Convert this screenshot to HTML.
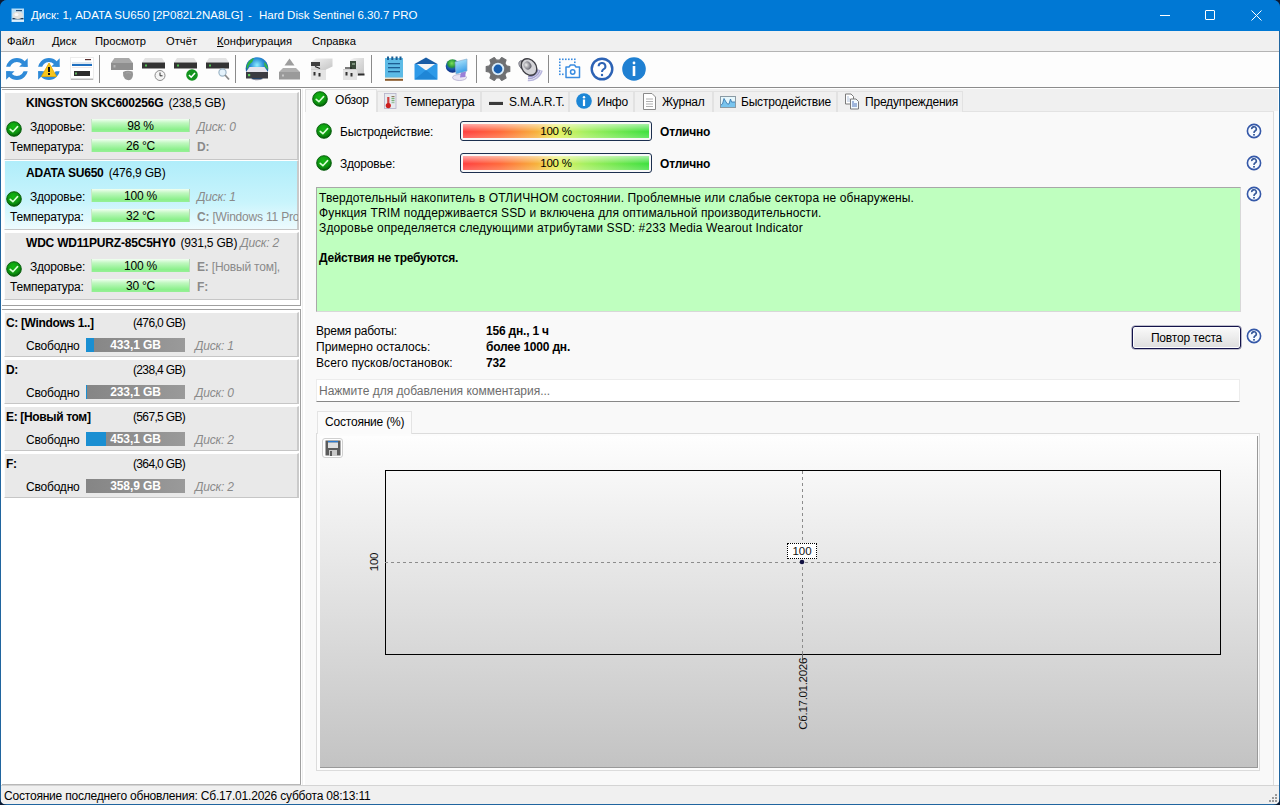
<!DOCTYPE html>
<html><head><meta charset="utf-8">
<style>
*{box-sizing:border-box;margin:0;padding:0}
html,body{width:1280px;height:805px;overflow:hidden;background:#0b1a33}
body{font-family:"Liberation Sans",sans-serif;font-size:12px;letter-spacing:-0.2px;color:#000;position:relative}
.a{position:absolute}
.nw{white-space:nowrap}
.b{font-weight:bold}
.r{font-weight:normal;margin-left:2px}
.it{font-style:italic;color:#8a8a8a}
.gr{color:#8a8a8a}
.win{left:0;top:0;width:1280px;height:805px;background:#20659f;border-radius:7px;overflow:hidden}
.title{left:0;top:0;width:1280px;height:31px;background:#0078d4}
.ttext{left:31px;top:9px;color:#fff;font-size:11.5px;letter-spacing:0;white-space:nowrap}
.menu{left:1px;top:31px;width:1278px;height:21px;background:#f0f0f0;border-bottom:1px solid #b4b4b4}
.mi{top:4px;font-size:11.2px;letter-spacing:0;color:#000;white-space:nowrap}
.tb{left:1px;top:52px;width:1278px;height:36px;background:#fdfdfd;border-bottom:1px solid #8c8c8c}
.client{left:1px;top:88px;width:1278px;height:697px;background:#fff}
.status{left:1px;top:785px;width:1278px;height:19px;background:#f0f0f0;border-top:1px solid #d4d4d4}
.card{left:4px;width:295px;background:#e9e9e9;border-top:1px solid #fff;border-left:1px solid #fbfbfb;border-right:2px solid #cacaca;border-bottom:1px solid #c6c6c6}
.card.sel{background:linear-gradient(#b0edfa,#c8f4fc 60%,#eefbfe)}
.gbar{width:99px;height:13px;background:linear-gradient(#f2fff2,#c0f8c0 30%,#8cf08c 80%,#96f096);text-align:center;line-height:14px;font-size:12px;border-left:1px solid #c8e8c8;border-right:1px solid #b8d8b8}
.fbar{width:99px;height:14px;background:linear-gradient(90deg,#858585,#9a9a9a);color:#fff;font-weight:bold;font-size:12px;letter-spacing:-0.1px;text-align:center;line-height:15px}
.fbar i{position:absolute;left:0;top:0;height:14px;background:#1a8fd2}
.fbar span{position:relative}
.pbar{width:192px;height:20px;border:1px solid #1c2f4f;border-radius:3px;background:#f8f8f8;padding:1px}
.pbar::before{content:"";position:absolute;left:2px;top:2px;right:2px;bottom:2px;background:linear-gradient(90deg,#ff4040 0%,#ff6a3a 20%,#f7b23a 40%,#e8f05a 50%,#a8f060 65%,#3ee03e 100%)}
.pbar::after{content:"";position:absolute;left:2px;top:2px;right:2px;bottom:2px;background:linear-gradient(rgba(255,255,255,0.55),rgba(255,255,255,0.1) 45%,rgba(0,0,0,0) 55%,rgba(255,255,255,0.2))}
.pbar{text-align:center;line-height:17px;font-size:11.5px}
.pbar span{position:relative;z-index:2}
.tab{background:#f0f0f0;border:1px solid #e2e2e2;border-bottom:none}
.tab.act{background:#f9f9f9;border-color:#e3e3e3;z-index:2}
.msg{background:#bfffbf;border:1px solid #a8a8a8;border-right-color:#d8d8d8;border-bottom-color:#d8d8d8;font-size:12px;letter-spacing:0.13px}
.btn{border:1px solid #13134a;border-radius:3px;box-shadow:0 0 0 0.6px rgba(19,19,74,0.5),inset 0 0 0 1px #fdfdff;background:linear-gradient(#fafafa,#ececec 50%,#dedede);text-align:center;line-height:22px;font-size:12px}
.cmt{background:#fff;border:1px solid #ececec;border-bottom:1px solid #888;color:#6d6d6d}
.chart{background:linear-gradient(#fefefe,#c3c3c3);border-right:1px solid #999;border-bottom:1px solid #999}
</style></head><body>
<svg width="0" height="0" style="position:absolute"><defs>
<radialGradient id="okg" cx="0.45" cy="0.35" r="0.65"><stop offset="0" stop-color="#14b814"/><stop offset="0.7" stop-color="#0c920f"/><stop offset="1" stop-color="#035c06"/></radialGradient>
<symbol id="ok" viewBox="0 0 16 16"><circle cx="8" cy="8" r="7.9" fill="#c8f0c8" opacity="0.6"/><circle cx="8" cy="8" r="7.3" fill="url(#okg)" stroke="#03560a" stroke-width="0.9"/><path d="M4.2 8.3 L6.9 10.7 L11.6 5.6" stroke="#dcffd8" stroke-width="1.6" fill="none" stroke-linecap="round"/></symbol>
<symbol id="hlp" viewBox="0 0 16 16"><circle cx="8" cy="8" r="6.6" fill="#f6faff" stroke="#3558a8" stroke-width="1.6"/><path d="M5.7 6.1 A2.3 2.2 0 1 1 9 8 Q8 8.6 8 10" stroke="#35589a" stroke-width="1.6" fill="none"/><rect x="7.1" y="11" width="1.8" height="1.6" fill="#35589a"/></symbol>
</defs></svg>
<div class="a win">
  <div class="a title">
    <svg class="a" style="left:11px;top:8px" width="14" height="15" viewBox="0 0 14 15"><rect x="0.5" y="0.5" width="12.5" height="13.5" fill="#b8ddf6"/><rect x="5" y="2" width="6" height="1.2" fill="#2a4a70"/><rect x="1.5" y="10" width="11" height="1.3" fill="#223a55"/><ellipse cx="6.8" cy="7.3" rx="5.2" ry="3.8" fill="#e4e2de"/><ellipse cx="5.5" cy="6.5" rx="2" ry="1.5" fill="#fafafa"/><rect x="1" y="12" width="12" height="1.5" fill="#dfeffb"/></svg>
    <div class="a ttext">Диск: 1, ADATA SU650 [2P082L2NA8LG]</div><div class="a ttext" style="left:248px">-</div><div class="a ttext" style="left:259px">Hard Disk Sentinel 6.30.7 PRO</div>
    <div class="a" style="left:1160px;top:15px;width:10px;height:1px;background:#fff"></div>
    <div class="a" style="left:1205px;top:10px;width:10px;height:10px;border:1px solid #fff;border-radius:1px"></div>
    <svg class="a" style="left:1251px;top:10px" width="11" height="11"><path d="M0.5 0.5 L10.5 10.5 M10.5 0.5 L0.5 10.5" stroke="#fff" stroke-width="1"/></svg>
  </div>
  <div class="a menu">
    <div class="a mi" style="left:6px">Файл</div>
    <div class="a mi" style="left:51px">Диск</div>
    <div class="a mi" style="left:94px">Просмотр</div>
    <div class="a mi" style="left:165px">Отчёт</div>
    <div class="a mi" style="left:216px"><u>К</u>онфигурация</div>
    <div class="a mi" style="left:311px">Справка</div>
  </div>
  <div class="a tb">
    <!-- refresh -->
    <svg class="a" style="left:4px;top:5px" width="24" height="24" viewBox="0 0 24 24">
      <defs><clipPath id="ct"><rect x="0" y="0" width="24" height="9.7"/></clipPath><clipPath id="cb"><rect x="0" y="14.2" width="24" height="10"/></clipPath></defs>
      <circle cx="11.9" cy="12" r="9" stroke="#2e8ad8" stroke-width="4" fill="none" clip-path="url(#ct)"/>
      <path d="M22.7 1.3 V9.7 H14.2 Z" fill="#2e8ad8"/>
      <circle cx="11.9" cy="12" r="9" stroke="#2e8ad8" stroke-width="4" fill="none" clip-path="url(#cb)"/>
      <path d="M1.1 22.7 V14.2 H9.5 Z" fill="#2e8ad8"/>
    </svg>
    <svg class="a" style="left:36px;top:5px" width="24" height="24" viewBox="0 0 24 24">
      <circle cx="11.9" cy="12" r="9" stroke="#2e8ad8" stroke-width="4" fill="none" clip-path="url(#ct)"/>
      <path d="M22.7 1.3 V9.7 H14.2 Z" fill="#2e8ad8"/>
      <circle cx="11.9" cy="12" r="9" stroke="#2e8ad8" stroke-width="4" fill="none" clip-path="url(#cb)"/>
      <path d="M1.1 22.7 V14.2 H9.5 Z" fill="#2e8ad8"/>
      <path d="M12 6 L19.5 19.5 H4.5 Z" fill="#f7c51c" stroke="#e3a900" stroke-width="0.8" stroke-linejoin="round"/>
      <rect x="11" y="10" width="2" height="5" fill="#111"/><rect x="11" y="16" width="2" height="2" fill="#111"/>
    </svg>
    <svg class="a" style="left:69px;top:5px" width="24" height="24" viewBox="0 0 24 24">
      <rect x="0.5" y="0.5" width="23" height="22" fill="#fff" stroke="#ececec"/>
      <rect x="1" y="21.5" width="22" height="1.5" fill="#b9b9b9"/>
      <rect x="2" y="5" width="20" height="2" fill="#dfe8f0"/>
      <rect x="2" y="7" width="20" height="2" fill="#1f6fc0"/>
      <rect x="15" y="2" width="6" height="1.2" fill="#5a3030"/>
      <rect x="2" y="10" width="20" height="1" fill="#f0e8e8"/>
      <rect x="4" y="14" width="16" height="5" fill="#2c2c2c"/>
      <rect x="5" y="15.5" width="2" height="2" fill="#5fb05f"/>
    </svg>
    <div class="a" style="left:98px;top:3px;width:1px;height:28px;background:#8a8a8a"></div>
    <!-- hdd gray with shield -->
    <svg class="a" style="left:109px;top:5px" width="25" height="25" viewBox="0 0 25 25">
      <path d="M4.5 1 H19 L23 6 H1 Z" fill="#a9a9a9"/>
      <rect x="1" y="6" width="22" height="7" fill="#8f8f8f"/>
      <rect x="3.5" y="8" width="2" height="2.5" fill="#b5b5b5"/>
      <path d="M13 15 Q17 13 22.5 14.5 Q24 19 21 22.5 Q18 24 15 22 Q12.5 19 13 15 Z" fill="#959595"/>
      <path d="M16 16 Q19 15 21 16.5" stroke="#aaa" stroke-width="0.8" fill="none"/>
    </svg>
    <!-- hdd clock -->
    <svg class="a" style="left:141px;top:5px" width="25" height="25" viewBox="0 0 25 25">
      <path d="M3 1 H20 L23 5.5 H0 Z" fill="#e2e2e2"/>
      <rect x="0" y="5.5" width="23" height="6" fill="#333"/>
      <rect x="3" y="7.5" width="2" height="2" fill="#4fc04f"/>
      <circle cx="18" cy="18.5" r="5" fill="#f4f4f4" stroke="#8b8b8b" stroke-width="1"/>
      <path d="M18 15.5 V18.8 H20.5" stroke="#333" stroke-width="1" fill="none"/>
    </svg>
    <!-- hdd check -->
    <svg class="a" style="left:173px;top:5px" width="25" height="25" viewBox="0 0 25 25">
      <path d="M3 1 H20 L23 5.5 H0 Z" fill="#e2e2e2"/>
      <rect x="0" y="5.5" width="23" height="6" fill="#333"/>
      <rect x="3" y="7.5" width="2" height="2" fill="#4fc04f"/>
      <circle cx="18" cy="18" r="5.8" fill="#13941e"/>
      <path d="M15 18 L17.2 20.2 L21 16" stroke="#fff" stroke-width="1.6" fill="none"/>
    </svg>
    <!-- hdd search -->
    <svg class="a" style="left:205px;top:5px" width="25" height="25" viewBox="0 0 25 25">
      <path d="M3 1 H20 L23 5.5 H0 Z" fill="#e2e2e2"/>
      <rect x="0" y="5.5" width="23" height="6" fill="#333"/>
      <rect x="3" y="7.5" width="2" height="2" fill="#4fc04f"/>
      <circle cx="16.5" cy="15.5" r="3.6" fill="#e4f2fb" stroke="#9fb7c8" stroke-width="1.2"/>
      <path d="M19 18 L23 22.5" stroke="#8a8a8a" stroke-width="1.8"/>
    </svg>
    <div class="a" style="left:234px;top:3px;width:1px;height:28px;background:#8a8a8a"></div>
    <!-- globe hdd -->
    <svg class="a" style="left:244px;top:4px" width="25" height="25" viewBox="0 0 25 25">
      <defs><radialGradient id="gl" cx="0.5" cy="0.35" r="0.65"><stop offset="0" stop-color="#8ff0ff"/><stop offset="0.45" stop-color="#2a8ed8"/><stop offset="1" stop-color="#0c3f80"/></radialGradient></defs>
      <circle cx="12" cy="12.5" r="11.3" fill="url(#gl)"/>
      <path d="M1.5 11 Q3 4 9 2 Q8 6 5 8 Q3 10 2.5 13 Z" fill="#2fb540"/>
      <path d="M19 6 Q23 9 23 13.5 Q21 12 19.5 10 Z" fill="#3ab84a"/>
      <path d="M4.5 11 H19.5 L23 16 H1 Z" fill="#e6e4ec"/>
      <rect x="1" y="16" width="22" height="6.5" fill="#3c3c42"/>
      <rect x="3" y="18" width="2.2" height="2.2" fill="#5fd060"/>
      <path d="M6 23 Q12 25.5 18 23 Z" fill="#8a8a9a"/>
    </svg>
    <!-- eject -->
    <svg class="a" style="left:277px;top:5px" width="25" height="25" viewBox="0 0 25 25">
      <path d="M11.5 1.5 L16.5 8.5 H6.5 Z" fill="#9d9d9d"/>
      <path d="M5 11 H18 L22 15 H1 Z" fill="#b0b0b0"/>
      <rect x="1" y="15" width="21" height="7.5" fill="#9a9a9a"/>
      <rect x="4" y="17.5" width="2" height="2" fill="#c8c8c8"/>
    </svg>
    <!-- drives -->
    <svg class="a" style="left:309px;top:5px" width="25" height="25" viewBox="0 0 25 25">
      <defs><linearGradient id="bx" x1="0" y1="0" x2="1" y2="1"><stop offset="0" stop-color="#f2f2f2"/><stop offset="1" stop-color="#c4c4c4"/></linearGradient></defs>
      <path d="M1 5 L6 1.5 H22.5 V9.5 L14 13.5 H1 Z" fill="url(#bx)"/>
      <path d="M1 5 H10 V9 H1 Z" fill="#3e3e3e"/>
      <path d="M5 9.5 L10 11.5" stroke="#222" stroke-width="1.2"/>
      <rect x="1" y="12" width="15" height="11" fill="#e4e4e4"/>
      <rect x="1" y="12" width="15" height="1" fill="#d0d0d0"/>
      <rect x="3.5" y="15" width="2" height="3.5" fill="#333"/><rect x="8.5" y="16" width="2" height="3.5" fill="#333"/>
    </svg>
    <!-- computer drives -->
    <svg class="a" style="left:341px;top:5px" width="25" height="25" viewBox="0 0 25 25">
      <path d="M8 3 L12 1 H22 V17.5 L14 19 H8 Z" fill="url(#bx)"/>
      <rect x="8" y="4" width="6" height="9" fill="#3a4a3a"/>
      <rect x="10" y="6" width="3" height="2" fill="#7a907a"/>
      <rect x="16" y="16.5" width="6.5" height="2" fill="#2e2e2e"/>
      <path d="M3 11 H10" stroke="#222" stroke-width="1.2"/>
      <rect x="1" y="12" width="14" height="11" fill="#e4e4e4"/>
      <rect x="1" y="12" width="14" height="1" fill="#d0d0d0"/>
      <rect x="3.5" y="15" width="2" height="3.5" fill="#333"/><rect x="8.5" y="16" width="2" height="3.5" fill="#333"/>
    </svg>
    <div class="a" style="left:370px;top:3px;width:1px;height:28px;background:#8a8a8a"></div>
    <!-- notepad -->
    <svg class="a" style="left:383px;top:4px" width="20" height="25" viewBox="0 0 20 25">
      <rect x="1" y="2" width="18" height="20" fill="#5dbbe6"/>
      <rect x="1" y="21.5" width="18" height="1.5" fill="#e9e2d0"/>
      <rect x="1" y="23" width="18" height="1.8" fill="#8b5a2b"/>
      <rect x="3" y="0.5" width="2" height="3.5" fill="#1d5e93"/><rect x="7.3" y="0.5" width="2" height="3.5" fill="#1d5e93"/><rect x="11.6" y="0.5" width="2" height="3.5" fill="#1d5e93"/><rect x="15.5" y="0.5" width="2" height="3.5" fill="#1d5e93"/>
      <rect x="4" y="7" width="12" height="1.3" fill="#1d5e93"/><rect x="4" y="11" width="12" height="1.3" fill="#1d5e93"/><rect x="4" y="15" width="12" height="1.3" fill="#1d5e93"/>
    </svg>
    <!-- mail -->
    <svg class="a" style="left:413px;top:5px" width="25" height="24" viewBox="0 0 25 24">
      <path d="M0.5 7 L12 0.5 L23.5 7 Z" fill="#1a5da6"/>
      <path d="M0.5 7 H23.5 V22.5 H0.5 Z" fill="#2e9ae8"/>
      <path d="M3 7 H21 L12 13.5 Z" fill="#f6f6f6"/>
      <path d="M0.5 22.5 L12 13 L23.5 22.5 Z" fill="#1f86d6"/>
    </svg>
    <!-- network -->
    <svg class="a" style="left:444px;top:4px" width="25" height="25" viewBox="0 0 25 25">
      <defs><linearGradient id="mon" x1="0" y1="0" x2="0.3" y2="1"><stop offset="0" stop-color="#b8ecfc"/><stop offset="1" stop-color="#3a9ee8"/></linearGradient>
      <radialGradient id="ng" cx="0.45" cy="0.3" r="0.7"><stop offset="0" stop-color="#7ae05a"/><stop offset="0.4" stop-color="#2a9a3a"/><stop offset="0.6" stop-color="#1a5ab0"/><stop offset="1" stop-color="#0a2a80"/></radialGradient></defs>
      <circle cx="7.5" cy="10" r="6.8" fill="url(#ng)"/>
      <ellipse cx="14.5" cy="21.5" rx="7" ry="3" fill="#e8e4f4" stroke="#a8a0c8" stroke-width="0.7"/>
      <path d="M16 16 L21 15.5 L20 21 L15 21.5 Z" fill="#9a80d8"/>
      <path d="M10 6 L22 3 V15 L11 18 Z" fill="url(#mon)" stroke="#8ab0d0" stroke-width="0.7"/>
    </svg>
    <div class="a" style="left:475px;top:3px;width:1px;height:28px;background:#8a8a8a"></div>
    <!-- gear -->
    <svg class="a" style="left:484px;top:5px" width="26" height="26" viewBox="0 0 26 26">
      <g transform="translate(13 12)">
        <path d="M8.46 -3.08 L11.74 -2.49 L11.74 2.49 L8.46 3.08 L6.89 5.79 L8.03 8.92 L3.71 11.41 L1.56 8.86 L-1.56 8.86 L-3.71 11.41 L-8.03 8.92 L-6.89 5.79 L-8.46 3.08 L-11.74 2.49 L-11.74 -2.49 L-8.46 -3.08 L-6.89 -5.79 L-8.03 -8.92 L-3.71 -11.41 L-1.56 -8.86 L1.56 -8.86 L3.71 -11.41 L8.03 -8.92 L6.89 -5.79 Z" fill="#6f7072" stroke="#6f7072" stroke-width="1.2" stroke-linejoin="round"/>
        <circle r="6.2" fill="#d8ecfa"/><circle r="4.4" fill="#1a5fae"/>
      </g>
    </svg>
    <!-- speaker -->
    <svg class="a" style="left:516px;top:5px" width="26" height="25" viewBox="0 0 26 25">
      <defs><radialGradient id="sp" cx="0.4" cy="0.35" r="0.7"><stop offset="0" stop-color="#f0f0f0"/><stop offset="1" stop-color="#5a5a66"/></radialGradient></defs>
      <path d="M21.18 12.46 A9.50 9.50 0 0 1 11.17 19.46" stroke="#8e8cc0" stroke-width="1.5" fill="none"/><path d="M23.11 12.98 A11.50 11.50 0 0 1 11.00 21.46" stroke="#a4a2d0" stroke-width="1.5" fill="none"/><path d="M25.04 13.49 A13.50 13.50 0 0 1 10.82 23.45" stroke="#bab8de" stroke-width="1.5" fill="none"/>
      <ellipse cx="5.5" cy="8" rx="3.2" ry="4.6" fill="url(#sp)" stroke="#6a6a78" stroke-width="0.8" transform="rotate(-25 5.5 8)"/>
      <ellipse cx="12" cy="10" rx="7" ry="9" fill="#d4d4d8" stroke="#3e3e44" stroke-width="1.4" transform="rotate(-38 12 10)"/>
      <ellipse cx="10.5" cy="8.5" rx="3.6" ry="4.2" fill="url(#sp)" transform="rotate(-38 10.5 8.5)"/>
    </svg>
    <div class="a" style="left:547px;top:3px;width:1px;height:28px;background:#8a8a8a"></div>
    <!-- screenshot -->
    <svg class="a" style="left:558px;top:6px" width="22" height="21" viewBox="0 0 22 21">
      <g fill="#3a8ce0"><rect x="0" y="0.5" width="1.6" height="1.6"/><rect x="3" y="0.5" width="1.6" height="1.6"/><rect x="6" y="0.5" width="1.6" height="1.6"/><rect x="9" y="0.5" width="1.6" height="1.6"/><rect x="12" y="0.5" width="1.6" height="1.6"/><rect x="15" y="0.5" width="1.6" height="1.6"/>
      <rect x="0" y="3.5" width="1.6" height="1.6"/><rect x="0" y="6.5" width="1.6" height="1.6"/><rect x="0" y="9.5" width="1.6" height="1.6"/><rect x="0" y="12.5" width="1.6" height="1.6"/><rect x="0" y="15.5" width="1.6" height="1.6"/><rect x="3" y="15.5" width="1.6" height="1.6"/><rect x="15" y="3.5" width="1.6" height="1.6"/></g>
      <path d="M7 9 H10 L11.5 7 H15.5 L17 9 H20.5 V19.5 H7 Z" fill="#fff" stroke="#3a8ce0" stroke-width="1.5" stroke-linejoin="round"/>
      <circle cx="13.7" cy="14" r="2.2" fill="none" stroke="#3a8ce0" stroke-width="1.5"/>
    </svg>
    <!-- help -->
    <svg class="a" style="left:589px;top:5px" width="24" height="24" viewBox="0 0 24 24">
      <circle cx="12" cy="12" r="10.3" fill="#fff" stroke="#2d63b5" stroke-width="2.4"/>
      <path d="M8.6 9.3 A3.4 3.4 0 1 1 13.4 12.4 Q12 13.2 12 15" stroke="#2d63b5" stroke-width="2" fill="none"/>
      <circle cx="12" cy="18" r="1.2" fill="#2d63b5"/>
    </svg>
    <!-- info -->
    <svg class="a" style="left:620px;top:4px" width="26" height="26" viewBox="0 0 26 26">
      <circle cx="13" cy="13" r="11.8" fill="#1f80d2"/>
      <circle cx="13" cy="7" r="1.4" fill="#fff"/>
      <rect x="11.7" y="10" width="2.6" height="10" fill="#fff"/>
    </svg>
  </div>
  <div class="a client"></div>
  <!-- left panel: disks -->
  <div class="a" style="left:2px;top:89px;width:299px;height:217px;background:#fff;border-top:1px solid #a7a7a7;border-right:1px solid #a0a0a0;border-bottom:1px solid #a0a0a0"></div>
  <div class="a card" style="top:92px;height:68px">
    <div class="a nw b" style="left:21px;top:3px">KINGSTON SKC600256G <span class="r">(238,5 GB)</span></div>
    <svg class="a chk" style="left:1px;top:28px" width="16" height="16"><use href="#ok"/></svg>
    <div class="a nw" style="left:25px;top:27px">Здоровье:</div>
    <div class="a gbar" style="left:86px;top:26px">98 %</div>
    <div class="a nw it" style="left:192px;top:27px">Диск: 0</div>
    <div class="a nw" style="left:5px;top:47px">Температура:</div>
    <div class="a gbar" style="left:86px;top:46px">26 °C</div>
    <div class="a nw gr b" style="left:192px;top:47px">D:</div>
  </div>
  <div class="a card sel" style="top:160px;height:70px">
    <div class="a nw b" style="left:21px;top:5px">ADATA SU650 <span class="r">(476,9 GB)</span></div>
    <svg class="a chk" style="left:1px;top:30px" width="16" height="16"><use href="#ok"/></svg>
    <div class="a nw" style="left:25px;top:29px">Здоровье:</div>
    <div class="a gbar" style="left:86px;top:28px">100 %</div>
    <div class="a nw it" style="left:192px;top:29px">Диск: 1</div>
    <div class="a nw" style="left:5px;top:49px">Температура:</div>
    <div class="a gbar" style="left:86px;top:48px">32 °C</div>
    <div class="a nw gr" style="left:192px;top:49px;width:101px;overflow:hidden"><b>C:</b> [Windows 11 Pro]</div>
  </div>
  <div class="a card" style="top:232px;height:68px">
    <div class="a nw b" style="left:21px;top:3px">WDC WD11PURZ-85C5HY0 <span class="r">(931,5 GB)</span> <span class="it" style="font-weight:normal">Диск: 2</span></div>
    <svg class="a chk" style="left:1px;top:28px" width="16" height="16"><use href="#ok"/></svg>
    <div class="a nw" style="left:25px;top:27px">Здоровье:</div>
    <div class="a gbar" style="left:86px;top:26px">100 %</div>
    <div class="a nw gr" style="left:192px;top:27px"><b>E:</b> [Новый том],</div>
    <div class="a nw" style="left:5px;top:47px">Температура:</div>
    <div class="a gbar" style="left:86px;top:46px">30 °C</div>
    <div class="a nw gr b" style="left:192px;top:47px">F:</div>
  </div>
  <!-- left panel: volumes -->
  <div class="a" style="left:2px;top:309px;width:299px;height:476px;background:#fff;border-top:1px solid #a0a0a0;border-right:1px solid #a0a0a0;border-bottom:1px solid #b8b8b8"></div>
  <div class="a card vol" style="top:312px;height:45px">
    <div class="a nw b" style="left:1px;top:3px;letter-spacing:-0.35px">C: [Windows 1..]</div>
    <div class="a nw" style="left:128px;top:3px;letter-spacing:-0.65px">(476,0 GB)</div>
    <div class="a nw" style="left:21px;top:26px">Свободно</div>
    <div class="a fbar" style="left:81px;top:25px"><i style="width:8px"></i><span>433,1 GB</span></div>
    <div class="a nw it" style="left:190px;top:26px">Диск: 1</div>
  </div>
  <div class="a card vol" style="top:359px;height:45px">
    <div class="a nw b" style="left:1px;top:3px;letter-spacing:-0.35px">D:</div>
    <div class="a nw" style="left:128px;top:3px;letter-spacing:-0.65px">(238,4 GB)</div>
    <div class="a nw" style="left:21px;top:26px">Свободно</div>
    <div class="a fbar" style="left:81px;top:25px"><i style="width:1px"></i><span>233,1 GB</span></div>
    <div class="a nw it" style="left:190px;top:26px">Диск: 0</div>
  </div>
  <div class="a card vol" style="top:406px;height:45px">
    <div class="a nw b" style="left:1px;top:3px;letter-spacing:-0.35px">E: [Новый том]</div>
    <div class="a nw" style="left:128px;top:3px;letter-spacing:-0.65px">(567,5 GB)</div>
    <div class="a nw" style="left:21px;top:26px">Свободно</div>
    <div class="a fbar" style="left:81px;top:25px"><i style="width:20px"></i><span>453,1 GB</span></div>
    <div class="a nw it" style="left:190px;top:26px">Диск: 2</div>
  </div>
  <div class="a card vol" style="top:453px;height:45px">
    <div class="a nw b" style="left:1px;top:3px;letter-spacing:-0.35px">F:</div>
    <div class="a nw" style="left:128px;top:3px;letter-spacing:-0.65px">(364,0 GB)</div>
    <div class="a nw" style="left:21px;top:26px">Свободно</div>
    <div class="a fbar" style="left:81px;top:25px"><i style="width:0px"></i><span>358,9 GB</span></div>
    <div class="a nw it" style="left:190px;top:26px">Диск: 2</div>
  </div>
  <!-- right panel -->
  <div class="a" style="left:302px;top:89px;width:1px;height:696px;background:#ededed"></div><div class="a" style="left:305px;top:89px;width:973px;height:696px;background:#f0f0f0"></div><div class="a" style="left:1274px;top:111px;width:4px;height:674px;background:#fafcfd"></div>
  <div class="a" style="left:305px;top:111px;width:969px;height:674px;background:#f9f9f9;border-top:1px solid #e3e3e3;border-right:1px solid #dcdcdc"></div>
  <!-- tabs -->
  <div class="a tab act" style="left:305px;top:89px;width:72px;height:23px">
    <svg class="a" style="left:6px;top:1px" width="16" height="16"><use href="#ok"/></svg>
    <div class="a nw" style="left:29px;top:3px">Обзор</div>
  </div>
  <div class="a tab" style="left:377px;top:91px;width:104px;height:21px">
    <svg class="a" style="left:6px;top:1px" width="13" height="16" viewBox="0 0 13 16"><rect x="0.5" y="0.5" width="11.5" height="15" fill="#e6eaee" stroke="#b4b0c8" stroke-width="0.8"/><rect x="3.2" y="4" width="2.2" height="8" fill="#d04040"/><circle cx="4.3" cy="12.6" r="2.6" fill="#cc1f1f"/><rect x="7.5" y="3" width="3" height="1.2" fill="#8a7a5a"/><rect x="7.5" y="5" width="3" height="1.2" fill="#7ab07a"/><rect x="7.5" y="7" width="3" height="1.2" fill="#7ab07a"/><rect x="7.5" y="9" width="3" height="1.2" fill="#9ac0a0"/></svg>
    <div class="a nw" style="left:26px;top:3px">Температура</div>
  </div>
  <div class="a tab" style="left:481px;top:91px;width:88px;height:21px">
    <div class="a" style="left:7px;top:9px;width:14px;height:4px;background:#3a3a3a;border-top:1px solid #ddd"></div>
    <div class="a nw" style="left:27px;top:3px">S.M.A.R.T.</div>
  </div>
  <div class="a tab" style="left:569px;top:91px;width:65px;height:21px">
    <svg class="a" style="left:6px;top:1px" width="16" height="16"><circle cx="8" cy="8" r="7.8" fill="#1c86d6"/><circle cx="8" cy="4.2" r="1.2" fill="#fff"/><rect x="6.9" y="6.5" width="2.2" height="6.5" fill="#fff"/></svg>
    <div class="a nw" style="left:27px;top:3px">Инфо</div>
  </div>
  <div class="a tab" style="left:634px;top:91px;width:79px;height:21px">
    <svg class="a" style="left:8px;top:1px" width="13" height="17" viewBox="0 0 13 17"><path d="M0.5 0.5 H9 L12.5 4 V16.5 H0.5 Z" fill="#fff" stroke="#8a8a8a"/><path d="M3 6h7M3 8.5h7M3 11h7M3 13.5h7" stroke="#b0b0b0"/></svg>
    <div class="a nw" style="left:27px;top:3px">Журнал</div>
  </div>
  <div class="a tab" style="left:713px;top:91px;width:124px;height:21px">
    <svg class="a" style="left:6px;top:4px" width="16" height="12" viewBox="0 0 16 12"><rect x="0.5" y="0.5" width="15" height="11" fill="#e6f7fc" stroke="#8a9aa4"/><path d="M1 9 L2.5 8 L4 2.5 L6 6 L7.5 8 L9 8 L10.5 3 L11.5 6 L15 6 V11 H1 Z" fill="#78c4ee"/><path d="M1 9 L2.5 8 L4 2.5 L6 6 L7.5 8 L9 8 L10.5 3 L11.5 6 L15 6" stroke="#3a7ab0" fill="none" stroke-width="0.9"/></svg>
    <div class="a nw" style="left:27px;top:3px">Быстродействие</div>
  </div>
  <div class="a tab" style="left:837px;top:91px;width:126px;height:21px">
    <svg class="a" style="left:6px;top:1px" width="16" height="17" viewBox="0 0 16 17"><path d="M1.5 1 H7 L9.5 3.5 V11 H1.5 Z" fill="#fff" stroke="#7a7a7a" stroke-width="1"/><path d="M3 4h2M3 6h3M3 8h3" stroke="#9ab0d0" stroke-width="0.8"/><path d="M6.5 6 H12 L14.5 8.5 V16 H6.5 Z" fill="#f4fbff" stroke="#7a7a7a" stroke-width="1"/><path d="M8 9h2M8 11h5M8 13h5" stroke="#3a62b0" stroke-width="0.9"/></svg>
    <div class="a nw" style="left:27px;top:3px">Предупреждения</div>
  </div>

  <!-- overview rows -->
  <svg class="a" style="left:316px;top:123px" width="16" height="16"><use href="#ok"/></svg>
  <div class="a nw" style="left:340px;top:125px">Быстродействие:</div>
  <div class="a pbar" style="left:460px;top:121px"><span>100 %</span></div>
  <div class="a nw b" style="left:660px;top:125px">Отлично</div>
  <svg class="a" style="left:316px;top:155px" width="16" height="16"><use href="#ok"/></svg>
  <div class="a nw" style="left:340px;top:157px">Здоровье:</div>
  <div class="a pbar" style="left:460px;top:153px"><span>100 %</span></div>
  <div class="a nw b" style="left:660px;top:157px">Отлично</div>

  <svg class="a help" style="left:1246px;top:123px" width="16" height="16"><use href="#hlp"/></svg>
  <svg class="a help" style="left:1246px;top:155px" width="16" height="16"><use href="#hlp"/></svg>
  <svg class="a help" style="left:1246px;top:186px" width="16" height="16"><use href="#hlp"/></svg>

  <!-- message -->
  <div class="a msg" style="left:316px;top:187px;width:925px;height:125px">
    <div style="position:absolute;left:2px;top:3px;line-height:15px">Твердотельный накопитель в ОТЛИЧНОМ состоянии. Проблемные или слабые сектора не обнаружены.<br>Функция TRIM поддерживается SSD и включена для оптимальной производительности.<br>Здоровье определяется следующими атрибутами SSD: #233 Media Wearout Indicator<br><br><b style="letter-spacing:-0.22px">Действия не требуются.</b></div>
  </div>

  <!-- stats -->
  <div class="a nw" style="left:316px;top:324px">Время работы:</div><div class="a nw" style="left:316px;top:340px;letter-spacing:0">Примерно осталось:</div><div class="a nw" style="left:316px;top:356px;letter-spacing:0.1px">Всего пусков/остановок:</div>
  <div class="a nw b" style="left:486px;top:324px">156 дн., 1 ч</div><div class="a nw b" style="left:486px;top:340px">более 1000 дн.</div><div class="a nw b" style="left:486px;top:356px">732</div>
  <div class="a btn" style="left:1132px;top:326px;width:109px;height:23px">Повтор теста</div>
  <svg class="a help" style="left:1246px;top:328px" width="16" height="16"><use href="#hlp"/></svg>

  <div class="a cmt" style="left:316px;top:379px;width:924px;height:23px"><span style="position:absolute;left:2px;top:4px;letter-spacing:0">Нажмите для добавления комментария...</span></div>

  <!-- chart tab -->
  <div class="a" style="left:316px;top:433px;width:944px;height:338px;border:1px solid #dcdcdc;background:#fcfcfc"></div>
  <div class="a" style="left:317px;top:411px;width:95px;height:23px;background:#fbfbfb;border:1px solid #e4e4e4;border-bottom:none"><span class="a nw" style="left:7px;top:3px">Состояние (%)</span></div>
  <div class="a chart" style="left:320px;top:436px;width:938px;height:332px"></div>
  <div class="a" style="left:322px;top:438px;width:21px;height:20px;background:#fff;border:1px solid #d0d0d0;border-radius:3px">
    <svg class="a" style="left:2px;top:1px" width="16" height="16" viewBox="0 0 16 16"><rect x="0.5" y="0.5" width="15" height="15" fill="#5b5b5b"/><rect x="3" y="1" width="10" height="1.5" fill="#2a7ad0"/><rect x="3" y="2.5" width="10" height="5.5" fill="#e0e0e0"/><rect x="4" y="10" width="8" height="6" fill="#c9c9c9"/><rect x="5" y="11" width="2" height="5" fill="#5b5b5b"/></svg>
  </div>
  <svg class="a" style="left:320px;top:436px" width="938" height="332" viewBox="320 436 938 332">
    <rect x="385.5" y="470.5" width="835" height="184" fill="none" stroke="#000" stroke-width="1"/>
    <path d="M385 562.5 H1220" stroke="#8c8c8c" stroke-dasharray="3 3" stroke-width="1"/>
    <path d="M802.5 471 V654" stroke="#8c8c8c" stroke-dasharray="3 3" stroke-width="1"/>
    <path d="M802.5 654 V660" stroke="#666" stroke-width="1"/>
    <circle cx="802" cy="562" r="2.3" fill="#101040"/>
    
    
    <text transform="translate(378 562) rotate(-90)" text-anchor="middle" font-family="Liberation Sans" font-size="11.5" fill="#111">100</text>
    <text transform="translate(807 658) rotate(-90)" text-anchor="end" font-family="Liberation Sans" font-size="11.5" letter-spacing="-0.3" fill="#111">Сб.17.01.2026</text>
  </svg>
  <div class="a" style="left:787px;top:543px;width:30px;height:16px;background:#fff;border:1px dotted #000;font-size:11.5px;letter-spacing:0;text-align:center;line-height:14px;color:#111">100</div>
  <div class="a status"><span class="a nw" style="left:3px;top:3px">Состояние последнего обновления: Сб.17.01.2026 суббота 08:13:11</span>
    <svg class="a" style="left:1265px;top:7px" width="12" height="12"><g fill="#9a9a9a"><rect x="9" y="1" width="2" height="2"/><rect x="6" y="4" width="2" height="2"/><rect x="9" y="4" width="2" height="2"/><rect x="3" y="7" width="2" height="2"/><rect x="6" y="7" width="2" height="2"/><rect x="9" y="7" width="2" height="2"/></g></svg>
  </div>
</div>
</body></html>
